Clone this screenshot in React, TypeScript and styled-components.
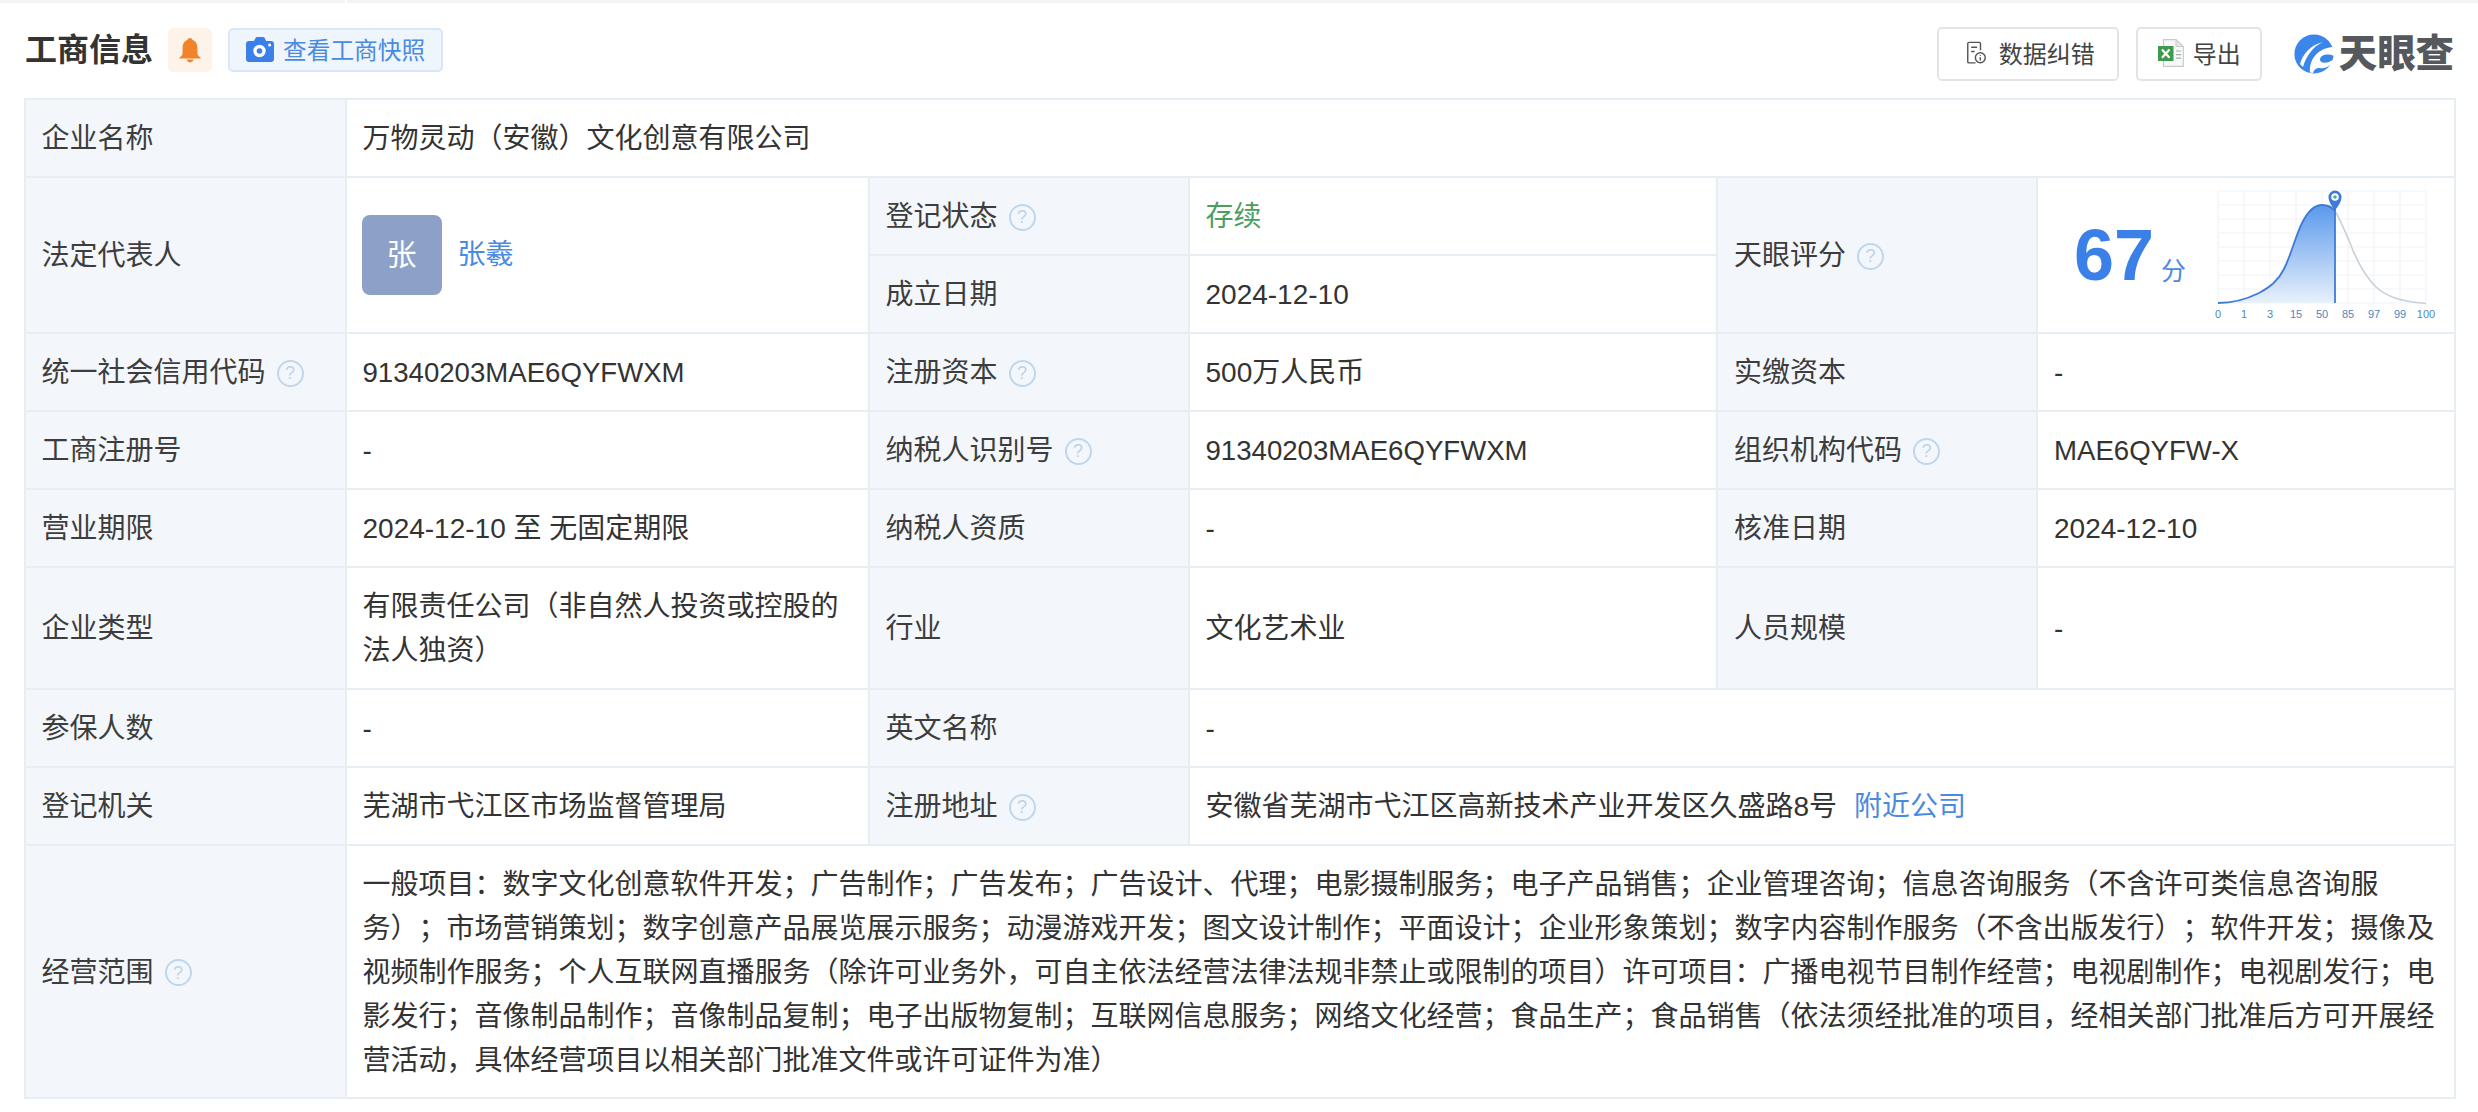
import React from "react";
import styled, { createGlobalStyle } from "styled-components";

const GlobalStyle = createGlobalStyle`
  html, body {
    margin: 0;
    padding: 0;
    background: #fff;
    font-family: "Liberation Sans", "Noto Sans CJK SC", sans-serif;
    color: #333;
  }
`;

const Page = styled.div`
  width: 2478px;
  height: 1112px;
  overflow: hidden;
`;

const TopEdge = styled.div`
  display: flex;
  gap: 2px;
  height: 3px;
`;

const TopEdgePart = styled.div<{ $wide?: boolean }>`
  background: #f3f4f6;
  flex: ${(p) => (p.$wide ? "1" : "0 0 345px")};
`;

const Header = styled.div`
  display: flex;
  justify-content: space-between;
  align-items: flex-start;
  height: 95px;
  padding: 0 24px 0 25px;
`;

const HeaderLeft = styled.div`
  display: flex;
  align-items: center;
  margin-top: 25px;
`;

const HeaderRight = styled.div`
  display: flex;
  align-items: flex-start;
  margin-top: 24px;
`;

const Title = styled.h1`
  margin: 0;
  font-size: 32px;
  line-height: 44px;
  font-weight: 700;
  color: #333;
`;

const BellTag = styled.div`
  display: flex;
  align-items: center;
  justify-content: center;
  width: 44px;
  height: 44px;
  margin-left: 15px;
  border-radius: 5px;
  background: #fdf3e8;
`;

const SnapshotTag = styled.div`
  display: flex;
  align-items: center;
  box-sizing: border-box;
  height: 44px;
  margin-left: 16px;
  padding: 0 16px 2px;
  border: 2px solid #d8e6f6;
  border-radius: 5px;
  background: #eff5fc;
  color: #4a8ae0;
  font-size: 23.7px;
  gap: 9px;
`;

const ToolButton = styled.div<{ $gap: number; $left: number; $right: number }>`
  display: flex;
  align-items: center;
  box-sizing: border-box;
  height: 54px;
  padding: 0 ${(p) => p.$right}px 3px ${(p) => p.$left}px;
  gap: ${(p) => p.$gap}px;
  margin-right: 17px;
  border: 2px solid #e2e4e6;
  border-radius: 5px;
  background: #fff;
  color: #444;
  font-size: 24px;
`;

const Logo = styled.div`
  display: flex;
  align-items: center;
  height: 40px;
  margin: 7px 0 0 15px;
  gap: 5px;
`;

const LogoText = styled.span`
  font-size: 38.4px;
  line-height: 40px;
  font-weight: 900;
  color: #55585c;
  white-space: nowrap;
`;

const InfoTable = styled.table`
  width: 2430px;
  margin-left: 23.5px;
  table-layout: fixed;
  border-collapse: collapse;
  font-size: 28px;
  line-height: 44px;
  text-spacing-trim: space-all;
`;

const Row = styled.tr<{ $height?: number }>`
  height: ${(p) => p.$height ?? 78}px;
`;

const Label = styled.td`
  box-sizing: border-box;
  padding: 2px 16px 0;
  border: 2px solid #e6eef4;
  background: #f3f7fb;
  color: #3d3d3d;
  white-space: nowrap;
`;

const Value = styled.td`
  box-sizing: border-box;
  padding: 2px 16px 0;
  border: 2px solid #e6eef4;
  color: #333;
`;

const Code = styled.span`
  font-size: 27.6px;
`;

const LabelInner = styled.span`
  display: inline-flex;
  align-items: center;
  gap: 11px;
`;

const Hint = styled.span`
  display: inline-flex;
  align-items: center;
  justify-content: center;
  box-sizing: border-box;
  width: 27px;
  height: 27px;
  border: 2px solid #bfd6ec;
  border-radius: 50%;
  color: #bfd2e4;
  font-size: 18px;
  line-height: 1;
`;

const Status = styled.span`
  color: #4c9e5f;
`;

const BlueLink = styled.a`
  color: #4a8ae0;
  text-decoration: none;
`;

const NearbyLink = styled(BlueLink)`
  margin-left: 17px;
`;

const Person = styled.div`
  display: flex;
  align-items: center;
  gap: 16px;
  margin: -2px 0 0 -1px;
`;

const Avatar = styled.div`
  display: flex;
  align-items: center;
  justify-content: center;
  width: 80px;
  height: 80px;
  border-radius: 8px;
  background: #8da1c8;
  color: #fff;
  font-size: 30px;
`;

const ScoreCell = styled(Value)`
  padding: 0;
`;

const ScoreWrap = styled.div`
  display: flex;
  align-items: center;
  padding-left: 36px;
`;

const ScoreText = styled.div`
  display: flex;
  align-items: baseline;
  color: #3b80e8;
`;

const ScoreNumber = styled.span`
  font-size: 72px;
  line-height: 80px;
  font-weight: 700;
`;

const ScoreUnit = styled.span`
  margin-left: 7px;
  font-size: 25px;
  color: #4a8ae0;
`;

const ChartSvg = styled.svg`
  display: block;
  flex: none;
  margin-left: 25px;
`;

const gridXs = [0, 26, 52, 78, 104, 130, 156, 182, 208];
const gridYs = [0, 14, 28, 42, 56, 70, 84, 98, 112];
const axis = ["0", "1", "3", "15", "50", "85", "97", "99", "100"];

const blueCurve =
  "M0 112 C12 112 25 110 41 102 C52 96 60 90 66 78 C73 64 78 44 84 32 C90 20 96 14 104 14 C110 14 114 16 117 20";
const grayCurve =
  "M117 20 C122 28 126 38 132 52 C138 68 146 84 158 96 C168 105 180 110 208 112.5";

function ScoreChart() {
  return (
    <ChartSvg width="232" height="140" viewBox="-7 -6 232 140">
      <defs>
        <linearGradient id="scoreFill" x1="0" y1="0" x2="0" y2="1">
          <stop offset="0" stopColor="#5a99ec" />
          <stop offset="1" stopColor="#e8f1fb" />
        </linearGradient>
      </defs>
      {gridXs.map((x) => (
        <line key={x} x1={x} y1="0" x2={x} y2="112" stroke="#f0f3f6" strokeWidth="1.2" />
      ))}
      {gridYs.map((y) => (
        <line key={y} x1="0" y1={y} x2="208" y2={y} stroke="#f0f3f6" strokeWidth="1.2" />
      ))}
      <path d={`${blueCurve} L117 112 L0 112 Z`} fill="url(#scoreFill)" />
      <path d={grayCurve} fill="none" stroke="#c8d1da" strokeWidth="1.6" />
      <path d={blueCurve} fill="none" stroke="#3f7ad6" strokeWidth="1.8" />
      <line x1="117" y1="18" x2="117" y2="112" stroke="#3f7ad6" strokeWidth="1.8" />
      <path
        d="M117 19.5 C114 15 110.5 11 110.5 6 A6.5 6.5 0 0 1 123.5 6 C123.5 11 120 15 117 19.5 Z"
        fill="#3f7ad6"
      />
      <circle cx="117" cy="6" r="3.8" fill="#fff" />
      <circle cx="117" cy="6" r="1.8" fill="#5aa5a0" />
      {axis.map((t, i) => (
        <text
          key={t}
          x={gridXs[i]}
          y="127"
          textAnchor="middle"
          fontSize="11"
          fontFamily='"Liberation Sans", sans-serif'
          fill="#4f86bd"
        >
          {t}
        </text>
      ))}
    </ChartSvg>
  );
}

function BellIcon() {
  return (
    <svg width="22" height="26" viewBox="0 0 22 26">
      <path
        d="M11 1 C12.6 1 13.4 2 13.6 3 C17 4.2 18.4 7.4 18.4 11 L18.4 16 C18.4 18 20 19.5 21.6 20.6 L21.6 21.6 L0.4 21.6 L0.4 20.6 C2 19.5 3.6 18 3.6 16 L3.6 11 C3.6 7.4 5 4.2 8.4 3 C8.6 2 9.4 1 11 1 Z"
        fill="#f3832a"
      />
      <path d="M7.6 22.6 L14.4 22.6 C14 24.4 12.6 25.4 11 25.4 C9.4 25.4 8 24.4 7.6 22.6 Z" fill="#f3832a" />
    </svg>
  );
}

function CameraIcon() {
  return (
    <svg width="28" height="25" viewBox="0 0 28 25">
      <path
        d="M3 4 L8 4 L9.4 1.2 C9.8 0.4 10.4 0 11.2 0 L17 0 C17.8 0 18.4 0.4 18.8 1.2 L20.2 4 L25 4 C26.8 4 28 5.2 28 7 L28 22 C28 23.8 26.8 25 25 25 L3 25 C1.2 25 0 23.8 0 22 L0 7 C0 5.2 1.2 4 3 4 Z"
        fill="#3b80e8"
      />
      <circle cx="13.5" cy="14" r="6.2" fill="#fff" />
      <circle cx="13.5" cy="14" r="2.8" fill="#3b80e8" />
      <circle cx="23.6" cy="8" r="1.5" fill="#fff" />
    </svg>
  );
}

function FeedbackIcon() {
  return (
    <svg width="19" height="24" viewBox="0 0 20 24" fill="none" stroke="#555" strokeWidth="1.5">
      <path d="M9 22.4 L2 22.4 C1.2 22.4 0.8 22 0.8 21.2 L0.8 2 C0.8 1.2 1.2 0.8 2 0.8 L13 0.8 C13.8 0.8 14.2 1.2 14.2 2 L14.2 9" />
      <path d="M4.4 6 L10.6 6 M4.4 10.4 L8 10.4" />
      <circle cx="14" cy="17" r="5.2" />
      <path d="M14 16.4 L14 19.8 M14 14 L14 15" />
    </svg>
  );
}

function ExcelIcon() {
  return (
    <svg width="26" height="28" viewBox="0 0 26 28">
      <path d="M5.5 0.7 L18 0.7 L25.3 7.5 L25.3 27.3 L5.5 27.3 Z" fill="#f7f8f8" stroke="#c8cbcd" strokeWidth="1.2" />
      <path d="M18 0.7 L18 7.5 L25.3 7.5 Z" fill="#e3e5e7" stroke="#c8cbcd" strokeWidth="1" />
      <path d="M18 12 L23 12 M18 15.6 L23 15.6 M18 19.2 L23 19.2" stroke="#a9adb0" strokeWidth="1.2" />
      <rect x="0" y="7" width="15.5" height="15" fill="#3f9a4d" />
      <path d="M4 10.4 L11.5 18.8 M11.5 10.4 L4 18.8" stroke="#fff" strokeWidth="2.2" />
    </svg>
  );
}

function LogoMark() {
  return (
    <svg width="40" height="40" viewBox="0 0 40 40">
      <circle cx="20" cy="20" r="19.6" fill="#3a86ea" />
      <path d="M6 30 C9 20 16 11 29 8 C20 12 13 20 9 33 Z" fill="#fff" />
      <path d="M16 38.5 C15 27 22 15 38 13 L40 14 L40 22 C33 19 27 21 26 25 C25.5 29 32 31 40 25 L39 29 C33 34 28 35 25 34 C22 33.5 20 36 19 39 Z" fill="#fff" />
    </svg>
  );
}

function HintLabel({ children }: { children: React.ReactNode }) {
  return (
    <LabelInner>
      {children}
      <Hint>?</Hint>
    </LabelInner>
  );
}

const SCOPE_TEXT =
  "一般项目：数字文化创意软件开发；广告制作；广告发布；广告设计、代理；电影摄制服务；电子产品销售；企业管理咨询；信息咨询服务（不含许可类信息咨询服务）；市场营销策划；数字创意产品展览展示服务；动漫游戏开发；图文设计制作；平面设计；企业形象策划；数字内容制作服务（不含出版发行）；软件开发；摄像及视频制作服务；个人互联网直播服务（除许可业务外，可自主依法经营法律法规非禁止或限制的项目）许可项目：广播电视节目制作经营；电视剧制作；电视剧发行；电影发行；音像制品制作；音像制品复制；电子出版物复制；互联网信息服务；网络文化经营；食品生产；食品销售（依法须经批准的项目，经相关部门批准后方可开展经营活动，具体经营项目以相关部门批准文件或许可证件为准）";

function App() {
  return (
    <Page>
      <GlobalStyle />
      <TopEdge>
        <TopEdgePart />
        <TopEdgePart $wide />
      </TopEdge>
      <Header>
        <HeaderLeft>
          <Title>工商信息</Title>
          <BellTag>
            <BellIcon />
          </BellTag>
          <SnapshotTag>
            <CameraIcon />
            查看工商快照
          </SnapshotTag>
        </HeaderLeft>
        <HeaderRight>
          <ToolButton $gap={13} $left={28} $right={22}>
            <FeedbackIcon />
            数据纠错
          </ToolButton>
          <ToolButton $gap={9} $left={20} $right={19}>
            <ExcelIcon />
            导出
          </ToolButton>
          <Logo>
            <LogoMark />
            <LogoText>天眼查</LogoText>
          </Logo>
        </HeaderRight>
      </Header>
      <InfoTable>
        <colgroup>
          <col width="321" />
          <col width="523" />
          <col width="320" />
          <col width="528.5" />
          <col width="320" />
          <col width="417.5" />
        </colgroup>
        <tbody>
          <Row>
            <Label>企业名称</Label>
            <Value colSpan={5}>万物灵动（安徽）文化创意有限公司</Value>
          </Row>
          <Row>
            <Label rowSpan={2}>法定代表人</Label>
            <Value rowSpan={2}>
              <Person>
                <Avatar>张</Avatar>
                <BlueLink>张羲</BlueLink>
              </Person>
            </Value>
            <Label>
              <HintLabel>登记状态</HintLabel>
            </Label>
            <Value>
              <Status>存续</Status>
            </Value>
            <Label rowSpan={2}>
              <HintLabel>天眼评分</HintLabel>
            </Label>
            <ScoreCell rowSpan={2}>
              <ScoreWrap>
                <ScoreText>
                  <ScoreNumber>67</ScoreNumber>
                  <ScoreUnit>分</ScoreUnit>
                </ScoreText>
                <ScoreChart />
              </ScoreWrap>
            </ScoreCell>
          </Row>
          <Row>
            <Label>成立日期</Label>
            <Value>2024-12-10</Value>
          </Row>
          <Row>
            <Label>
              <HintLabel>统一社会信用代码</HintLabel>
            </Label>
            <Value>
              <Code>91340203MAE6QYFWXM</Code>
            </Value>
            <Label>
              <HintLabel>注册资本</HintLabel>
            </Label>
            <Value>500万人民币</Value>
            <Label>实缴资本</Label>
            <Value>-</Value>
          </Row>
          <Row>
            <Label>工商注册号</Label>
            <Value>-</Value>
            <Label>
              <HintLabel>纳税人识别号</HintLabel>
            </Label>
            <Value>
              <Code>91340203MAE6QYFWXM</Code>
            </Value>
            <Label>
              <HintLabel>组织机构代码</HintLabel>
            </Label>
            <Value>
              <Code>MAE6QYFW-X</Code>
            </Value>
          </Row>
          <Row>
            <Label>营业期限</Label>
            <Value>2024-12-10 至 无固定期限</Value>
            <Label>纳税人资质</Label>
            <Value>-</Value>
            <Label>核准日期</Label>
            <Value>2024-12-10</Value>
          </Row>
          <Row $height={122}>
            <Label>企业类型</Label>
            <Value>有限责任公司（非自然人投资或控股的法人独资）</Value>
            <Label>行业</Label>
            <Value>文化艺术业</Value>
            <Label>人员规模</Label>
            <Value>-</Value>
          </Row>
          <Row>
            <Label>参保人数</Label>
            <Value>-</Value>
            <Label>英文名称</Label>
            <Value colSpan={3}>-</Value>
          </Row>
          <Row>
            <Label>登记机关</Label>
            <Value>芜湖市弋江区市场监督管理局</Value>
            <Label>
              <HintLabel>注册地址</HintLabel>
            </Label>
            <Value colSpan={3}>
              安徽省芜湖市弋江区高新技术产业开发区久盛路8号
              <NearbyLink>附近公司</NearbyLink>
            </Value>
          </Row>
          <Row $height={253}>
            <Label>
              <HintLabel>经营范围</HintLabel>
            </Label>
            <Value colSpan={5}>{SCOPE_TEXT}</Value>
          </Row>
        </tbody>
      </InfoTable>
    </Page>
  );
}

export default App;
